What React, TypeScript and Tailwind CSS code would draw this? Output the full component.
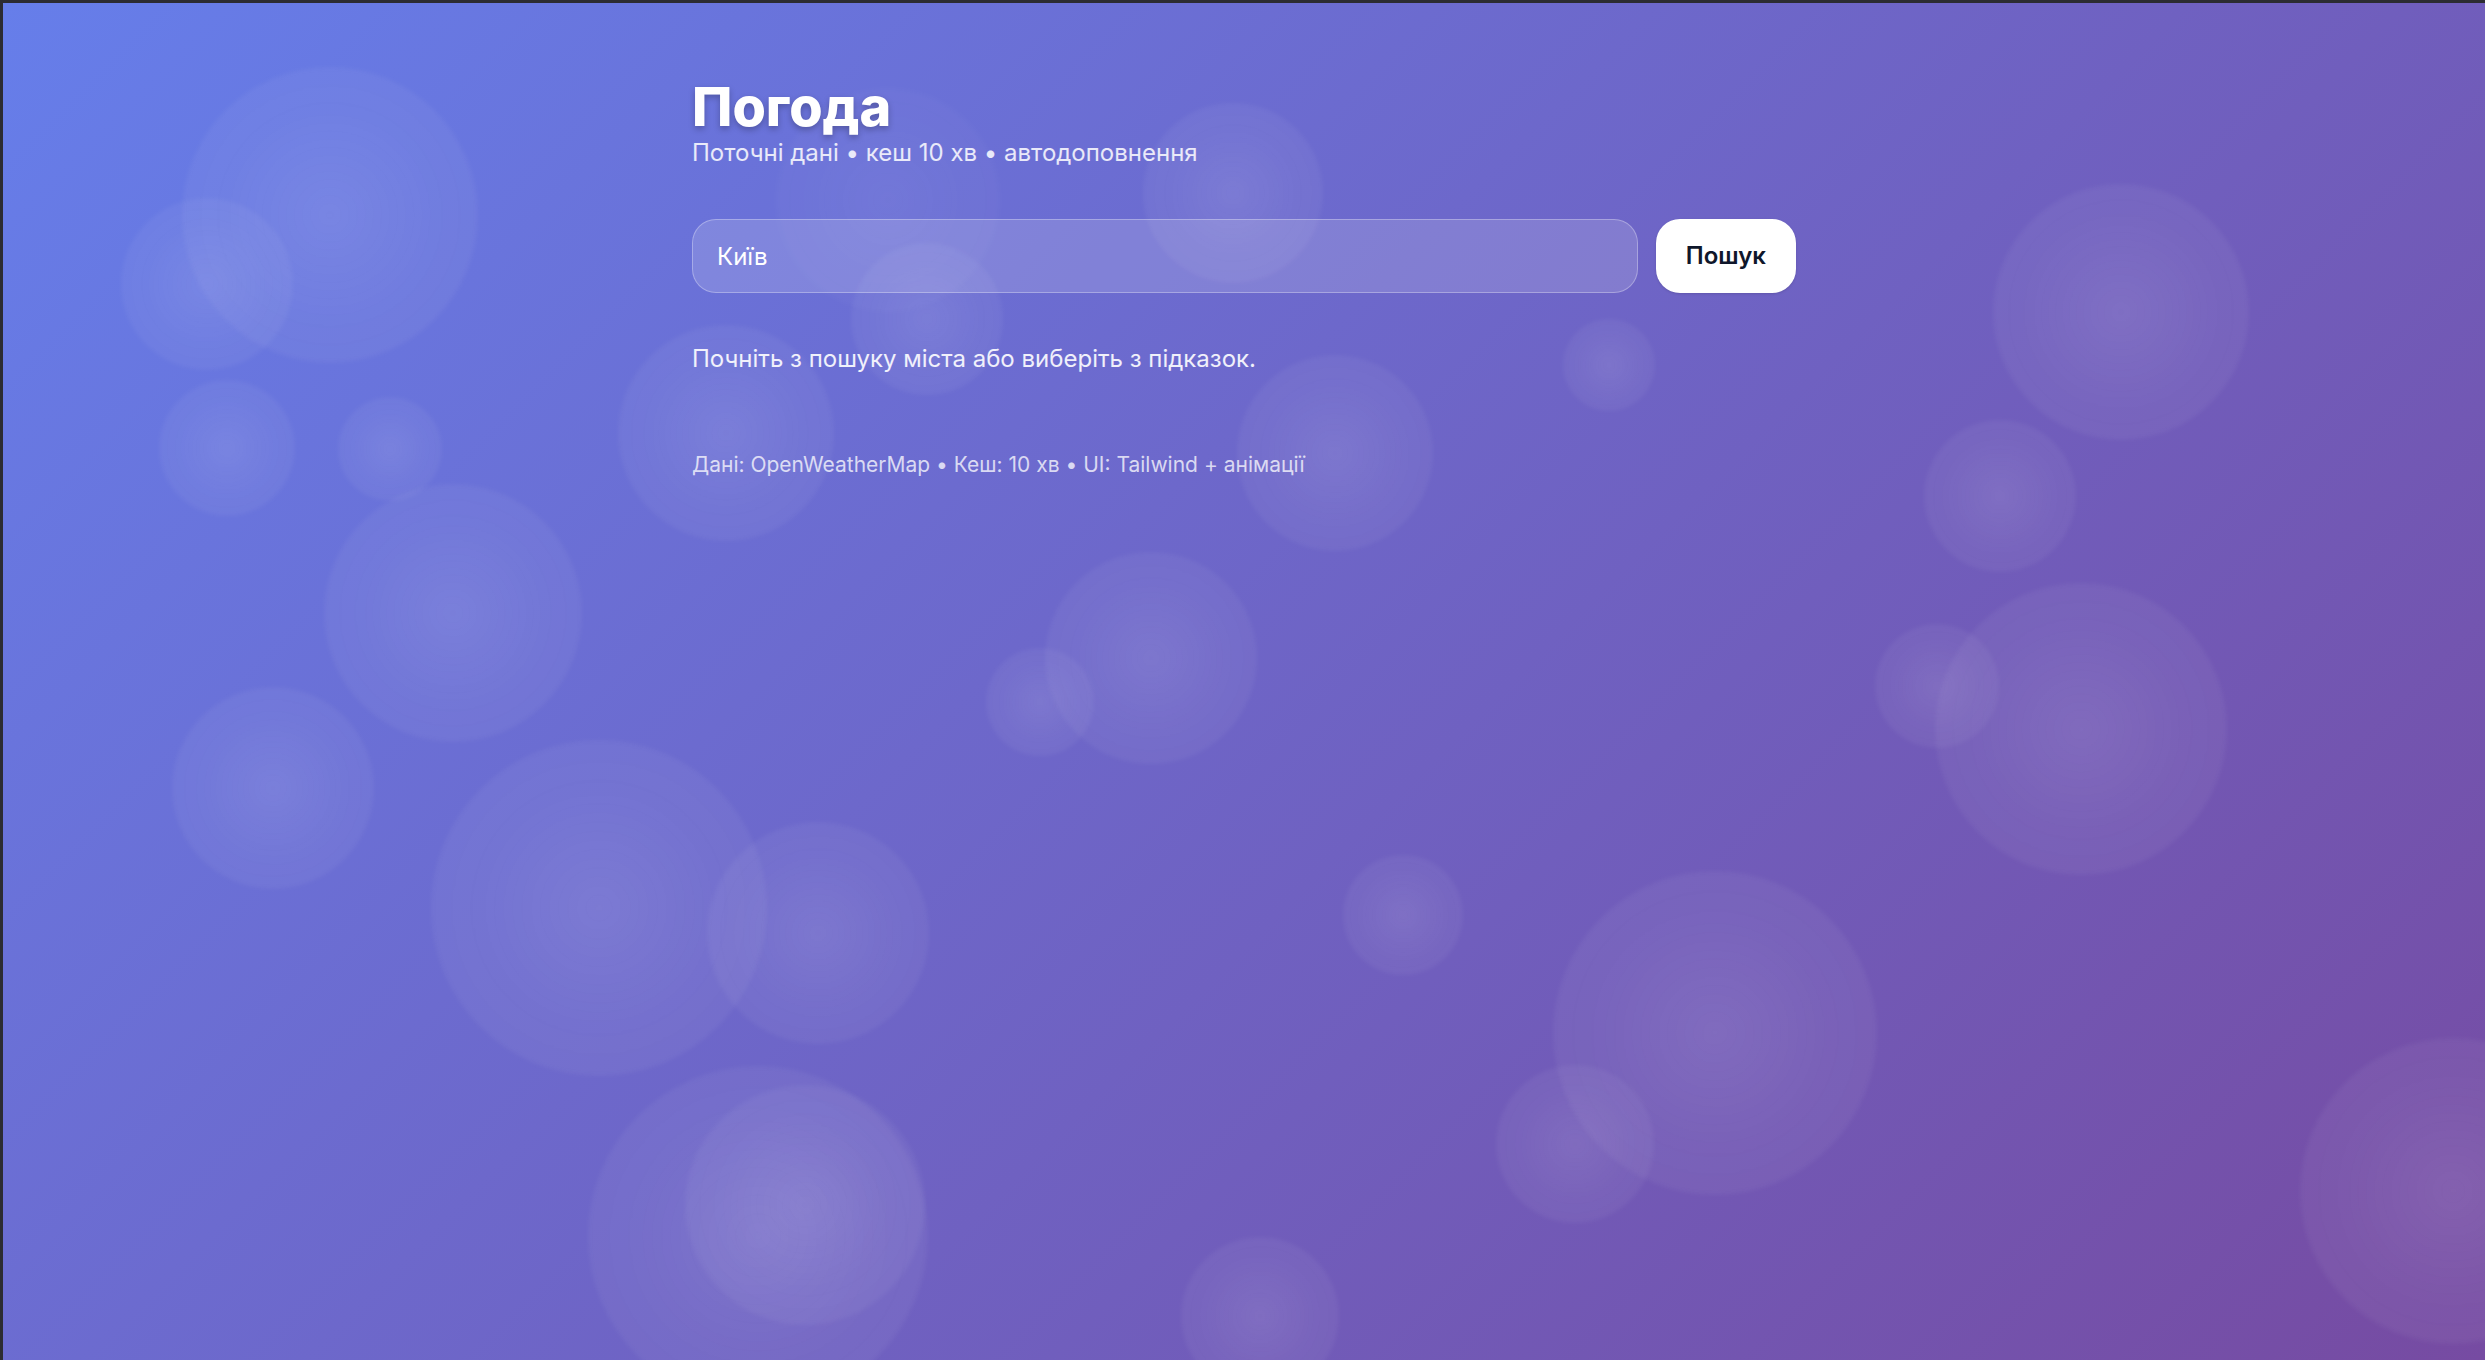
import React from "react";

const bubbles: { x: number; y: number; r: number; o?: number }[] = [
  { x: 330, y: 215, r: 148 },
  { x: 207, y: 284, r: 86 },
  { x: 227, y: 448, r: 68 },
  { x: 390, y: 449, r: 52 },
  { x: 453, y: 613, r: 129 },
  { x: 273, y: 788, r: 101 },
  { x: 599, y: 908, r: 168 },
  { x: 818, y: 933, r: 111 },
  { x: 758, y: 1236, r: 170 },
  { x: 805, y: 1205, r: 120 },
  { x: 726, y: 433, r: 108 },
  { x: 927, y: 319, r: 76 },
  { x: 888, y: 200, r: 112, o: 0.5 },
  { x: 1233, y: 193, r: 90 },
  { x: 1335, y: 453, r: 98 },
  { x: 1609, y: 365, r: 46 },
  { x: 1151, y: 658, r: 106 },
  { x: 1040, y: 702, r: 54 },
  { x: 1403, y: 915, r: 60 },
  { x: 1715, y: 1033, r: 162 },
  { x: 1575, y: 1144, r: 79 },
  { x: 1260, y: 1316, r: 79 },
  { x: 2121, y: 312, r: 128 },
  { x: 2000, y: 496, r: 76 },
  { x: 2081, y: 729, r: 146 },
  { x: 1937, y: 686, r: 62 },
  { x: 2453, y: 1191, r: 153 },
];

export default function App() {
  return (
    <div className="h-screen w-full box-border border-t-[3px] border-l-[3px] border-[#2c2c32] overflow-hidden">
      <div
        className="relative h-full w-full overflow-hidden bg-[linear-gradient(135deg,#667eea_0%,#764ba2_100%)]"
        style={{ fontFamily: "Inter, 'Noto Sans', sans-serif" }}
      >
        {bubbles.map((b, i) => (
          <div
            key={i}
            className="pointer-events-none absolute rounded-full blur-[2px] bg-[radial-gradient(circle_at_center,rgba(255,255,255,0.11)_0%,rgba(255,255,255,0.06)_50%,rgba(255,255,255,0.035)_100%)]"
            style={{
              left: b.x - 3 - b.r,
              top: b.y - 3 - b.r,
              width: b.r * 2,
              height: b.r * 2,
              opacity: b.o ?? 1,
            }}
          />
        ))}

        <div className="relative mx-auto max-w-[1152px] px-[24px] pt-[79px]">
          <h1 className="text-[54px] leading-[50px] font-extrabold text-white [text-shadow:0_3px_6px_rgba(0,0,0,0.25)]">
            Погода
          </h1>
          <p className="mt-[3px] text-[24px] leading-[36px] text-white/85">
            Поточні дані • кеш 10 хв • автодоповнення
          </p>

          <div className="mt-[48px] flex gap-[18px]">
            <input
              defaultValue="Київ"
              className="h-[74px] flex-1 rounded-[24px] border border-white/30 bg-white/15 px-[24px] text-[24px] text-white outline-none placeholder:text-white/60"
            />
            <button className="h-[74px] rounded-[24px] bg-white px-[30px] text-[24px] font-semibold text-slate-900 shadow-sm">
              Пошук
            </button>
          </div>

          <p className="mt-[48px] text-[24px] leading-[36px] text-white/90">
            Почніть з пошуку міста або виберіть з підказок.
          </p>

          <p className="mt-[73px] text-[21px] leading-[30px] text-white/75">
            Дані: OpenWeatherMap • Кеш: 10 хв • UI: Tailwind + анімації
          </p>
        </div>
      </div>
    </div>
  );
}
